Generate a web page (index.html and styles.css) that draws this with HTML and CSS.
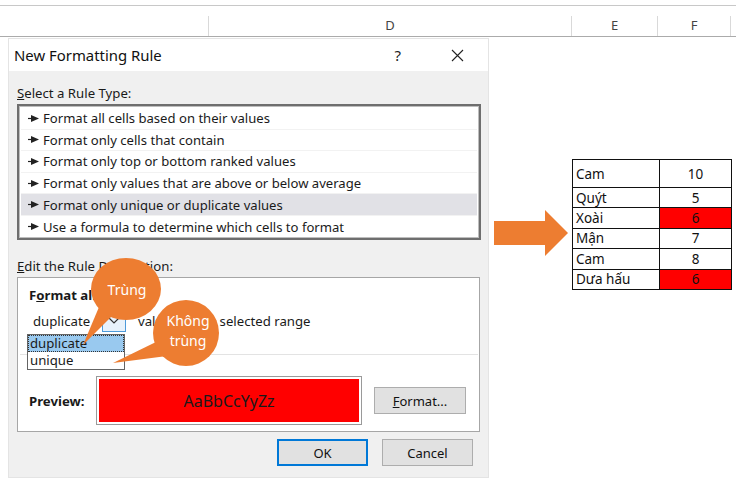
FILE: index.html
```html
<!DOCTYPE html>
<html>
<head>
<meta charset="utf-8">
<link rel="stylesheet" href="styles.css">
</head>
<body>
<div class="page">
  <div class="colheads">
    <div class="ch"></div>
    <div class="ch">D</div>
    <div class="ch">E</div>
    <div class="ch">F</div>
  </div>
  <div class="main">
    <div class="dialog">
      <div class="titlebar">
        <span class="title">New Formatting Rule</span>
        <span class="help">?</span>
        <svg class="close" width="13" height="13" viewBox="0 0 13 13"><path d="M1 1L12 12M12 1L1 12" stroke="#222" stroke-width="1.1" fill="none"/></svg>
      </div>
      <div class="dbody">
        <div class="label"><u>S</u>elect a Rule Type:</div>
        <div class="listbox">
          <div class="item"><svg class="bul" width="12" height="7" viewBox="0 0 12 7"><path d="M0 3.5H5" stroke="#222" stroke-width="1.2"/><path d="M3 0L11 3.5L3 7Z" fill="#222"/></svg>Format all cells based on their values</div>
          <div class="item"><svg class="bul" width="12" height="7" viewBox="0 0 12 7"><path d="M0 3.5H5" stroke="#222" stroke-width="1.2"/><path d="M3 0L11 3.5L3 7Z" fill="#222"/></svg>Format only cells that contain</div>
          <div class="item"><svg class="bul" width="12" height="7" viewBox="0 0 12 7"><path d="M0 3.5H5" stroke="#222" stroke-width="1.2"/><path d="M3 0L11 3.5L3 7Z" fill="#222"/></svg>Format only top or bottom ranked values</div>
          <div class="item"><svg class="bul" width="12" height="7" viewBox="0 0 12 7"><path d="M0 3.5H5" stroke="#222" stroke-width="1.2"/><path d="M3 0L11 3.5L3 7Z" fill="#222"/></svg>Format only values that are above or below average</div>
          <div class="item sel"><svg class="bul" width="12" height="7" viewBox="0 0 12 7"><path d="M0 3.5H5" stroke="#222" stroke-width="1.2"/><path d="M3 0L11 3.5L3 7Z" fill="#222"/></svg>Format only unique or duplicate values</div>
          <div class="item last"><svg class="bul" width="12" height="7" viewBox="0 0 12 7"><path d="M0 3.5H5" stroke="#222" stroke-width="1.2"/><path d="M3 0L11 3.5L3 7Z" fill="#222"/></svg>Use a formula to determine which cells to format</div>
        </div>
        <div class="label label2"><u>E</u>dit the Rule Description:</div>
        <div class="desc">
          <div class="fa">F<u>o</u>rmat all:</div>
          <div class="comborow">
            <div class="combo">
              <span class="cval">duplicate</span>
              <span class="ddbtn"><svg width="12" height="7" viewBox="0 0 12 7"><path d="M1 1L6 6L11 1" stroke="#333" stroke-width="1.2" fill="none"/></svg></span>
            </div>
            <span class="vals">values in the selected range</span>
          </div>
          <div class="sep"></div>
          <div class="prevrow">
            <span class="plabel">Preview:</span>
            <div class="preview"><div class="pinner">AaBbCcYyZz</div></div>
            <button class="btn fmt"><u>F</u>ormat...</button>
          </div>
          <div class="ddlist">
            <div class="ddi on">duplicate</div>
            <div class="ddi">unique</div>
          </div>
        </div>
        <div class="btnrow">
          <button class="btn ok">OK</button>
          <button class="btn">Cancel</button>
        </div>
      </div>
    </div>
    <svg class="bigarrow" width="74" height="46" viewBox="0 0 74 46"><path d="M0 11H51V0L74 23L51 46V35H0Z" fill="#ed7d31"/></svg>
    <table class="fruit">
      <tr class="r1"><td>Cam</td><td class="n">10</td></tr>
      <tr><td>Quýt</td><td class="n">5</td></tr>
      <tr><td>Xoài</td><td class="n red">6</td></tr>
      <tr><td>Mận</td><td class="n">7</td></tr>
      <tr><td>Cam</td><td class="n">8</td></tr>
      <tr><td>Dưa hấu</td><td class="n red">6</td></tr>
    </table>
  </div>
  <svg class="callouts" width="745" height="486" viewBox="0 0 745 486">
    <path d="M99 302L83 340L113 310Z" fill="#ed7d31"/>
    <ellipse cx="126" cy="284" rx="35" ry="31" fill="#ed7d31"/>
    <path d="M158 336L113 358L167 351Z" fill="#ed7d31"/>
    <circle cx="186" cy="328" r="33" fill="#ed7d31"/>
    <text x="127" y="290" class="ctext">Trùng</text>
    <text x="188" y="321" class="ctext">Không</text>
    <text x="188" y="341" class="ctext">trùng</text>
  </svg>
</div>
</body>
</html>
```

FILE: styles.css
```css
* { box-sizing: border-box; }
html, body { margin: 0; padding: 0; background: #fff; }
body { width: 745px; height: 486px; overflow: hidden; font-family: "Noto Sans", "Open Sans", sans-serif; color: #1a1a1a; }
.page { position: relative; width: 745px; height: 486px; }

.colheads {
  margin-top: 5px;
  width: 736px;
  height: 32px;
  border-top: 1px solid #c8c8c8;
  border-bottom: 1px solid #ababab;
  display: grid;
  grid-template-columns: 209px 363px 86px 73px;
}
.ch {
  margin-top: 10px;
  height: 20px;
  border-right: 1px solid #d9d9d9;
  text-align: center;
  font-size: 13px;
  line-height: 18px;
  color: #444;
}

.main { display: flex; align-items: flex-start; }

.dialog {
  margin-top: 2px;
  margin-left: 9px;
  width: 479px;
  height: 438px;
  background: #f0f0f0;
  box-shadow: 0 0 0 1px #e4e4e4;
  display: flex;
  flex-direction: column;
}
.titlebar {
  height: 32px;
  background: #fff;
  display: flex;
  align-items: center;
  padding-left: 5px;
}
.title { font-size: 14.9px; flex: 1; color: #111; }
.help { font-size: 15px; margin-right: 50px; color: #222; }
.close { margin-right: 24px; }

.dbody { padding: 0 7px 0 8px; flex: 1; }
.label { font-size: 13.2px; line-height: 16px; margin-top: 14px; }
.label2 { margin-top: 18px; }
.listbox {
  margin-top: 3px;
  width: 464px;
  height: 136px;
  background: #fff;
  border: 2px solid #6e6e6e;
  box-shadow: inset 0 0 0 1px #bdbdbd;
  padding: 2px;
}
.item {
  height: 21.6px;
  display: flex;
  align-items: center;
  font-size: 13.1px;
  padding-left: 7px;
  border-bottom: 1px solid #f2f2f2;
}
.item.last { border-bottom: none; }
.item.sel { background: #e1e1e6; }
.bul { margin-right: 3px; }

.desc {
  position: relative;
  margin-top: 3px;
  width: 463px;
  height: 155px;
  background: #fff;
  border: 1px solid #a6a6a6;
  padding: 9px 0 0 11px;
  font-size: 13.2px;
}
.fa { font-weight: 700; line-height: 16px; height: 16px; }
.comborow { display: flex; align-items: center; margin-top: 5px; height: 26px; }
.combo { width: 97px; height: 26px; display: flex; align-items: center; justify-content: space-between; }
.cval { padding-left: 4px; }
.ddbtn {
  width: 24px; height: 24px;
  border: 1px solid #4d9ad9;
  background: #e8f2fb;
  display: flex; align-items: center; justify-content: center;
  align-self: flex-start;
}
.vals { margin-left: 12px; }
.sep { margin: 20px 0 0 -9px; width: 458px; height: 1px; background: #e3e3e3; }
.prevrow { display: flex; align-items: center; margin-top: 21px; }
.plabel { font-weight: 700; width: 67px; }
.preview {
  width: 266px; height: 49px;
  border: 1px solid #9a9a9a;
  padding: 2px;
  background: #fff;
}
.pinner {
  height: 100%;
  background: #ff0000;
  display: flex; align-items: center; justify-content: center;
  font-size: 16px;
  color: #1a1a1a;
}
.btn {
  font-family: "Noto Sans", "Open Sans", sans-serif;
  font-size: 13px;
  color: #111;
  background: #e1e1e1;
  border: 1px solid #adadad;
  width: 91px; height: 27px;
  padding: 0;
}
.fmt { margin-left: 12px; width: 92px; }
.ddlist {
  position: absolute;
  left: 9px; top: 56px;
  width: 98px; height: 36px;
  border: 1px solid #646464;
  background: #fff;
}
.ddi { height: 17px; line-height: 16px; padding-left: 2px; font-size: 13.2px; }
.ddi.on { background: #99c9ef; outline: 1px dotted #333; outline-offset: -1px; }

.btnrow { display: flex; justify-content: flex-end; margin-top: 7px; padding-right: 8px; gap: 14px; }
.ok { border: 2px solid #0078d7; }

.bigarrow { margin-top: 173px; margin-left: 6px; flex: none; }
.fruit {
  margin-top: 122px;
  margin-left: 4px;
  border-collapse: collapse;
  font-family: "Noto Sans", "Open Sans", sans-serif;
  font-size: 13.5px;
  color: #111;
}
.fruit td { border: 1px solid #111; height: 20.4px; padding: 0 3px; line-height: 18px; }
.fruit td:first-child { width: 87px; }
.fruit td.n { width: 72px; text-align: center; }
.fruit tr.r1 td { height: 28px; }
.fruit td.red { background: #ff0000; }

.callouts { position: absolute; left: 0; top: 0; pointer-events: none; }
.ctext { font-family: "Noto Sans", "Open Sans", sans-serif; font-size: 14px; fill: #fff; text-anchor: middle; }
```
